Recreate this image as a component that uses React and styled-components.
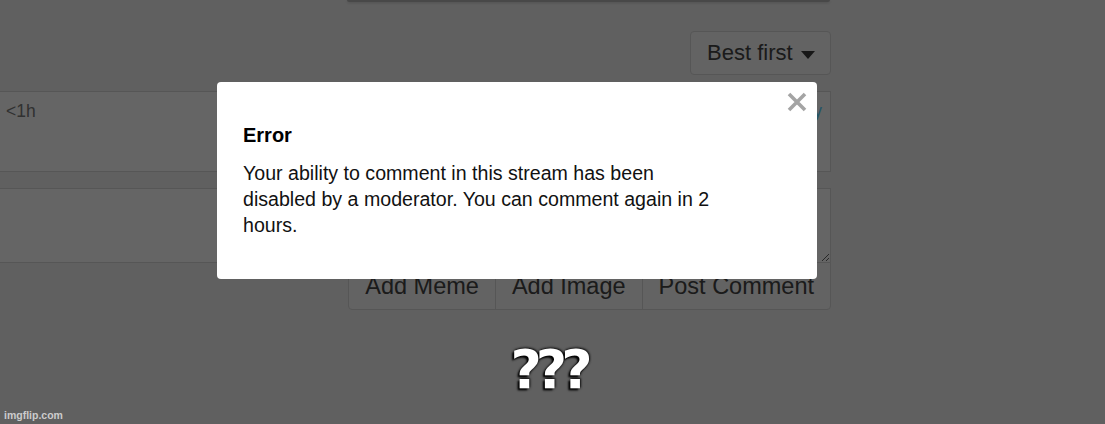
import React from "react";
import styled, { createGlobalStyle } from "styled-components";

const GlobalStyle = createGlobalStyle`
  html, body {
    margin: 0;
    padding: 0;
    background: #f0f0f0;
    overflow: hidden;
  }
  body {
    font-family: "Liberation Sans", Arial, sans-serif;
  }
`;

const Page = styled.div`
  position: relative;
  width: 1105px;
  height: 424px;
  overflow: hidden;
  background: #f0f0f0;
`;

const Content = styled.div`
  display: flex;
  flex-direction: column;
  width: 833px;
  margin-left: -1px;
`;

const TopEdge = styled.div`
  margin-left: 348px;
  width: 483px;
  height: 2px;
  background: #b4b4b4;
  border-radius: 0 0 4px 4px;
  box-shadow: 0 1px 3px rgba(0, 0, 0, 0.18);
`;

const SortRow = styled.div`
  display: flex;
  justify-content: flex-end;
  margin-top: 29px;
  padding-right: 1px;
`;

const SortButton = styled.button`
  display: flex;
  align-items: center;
  gap: 8px;
  height: 44px;
  width: 141px;
  box-sizing: border-box;
  padding: 0 14px 0 16px;
  border: 1px solid #d6d6d6;
  border-radius: 4px;
  background: #f7f7f7;
  font-family: "Liberation Sans", Arial, sans-serif;
  font-size: 22px;
  color: #444;
`;

const Caret = styled.span`
  width: 0;
  height: 0;
  border-left: 7px solid transparent;
  border-right: 7px solid transparent;
  border-top: 8px solid #3a3a3a;
  margin-top: 3px;
`;

const CommentCard = styled.div`
  margin-top: 16px;
  height: 81px;
  box-sizing: border-box;
  background: #fdfdfd;
  border: 1px solid #d8d8d8;
  margin-right: 1px;
`;

const CardHeader = styled.div`
  display: flex;
  justify-content: space-between;
  padding: 9px 8px 0 6px;
  font-size: 17.5px;
  line-height: 21px;
`;

const TimeAgo = styled.span`
  color: #7a7a7a;
`;

const ReplyLink = styled.span`
  color: #5ad2ff;
`;

const Compose = styled.textarea`
  display: block;
  margin-top: 16px;
  margin-right: 1px;
  height: 75px;
  box-sizing: border-box;
  background: #fdfdfd;
  border: 1px solid #d8d8d8;
  border-radius: 0;
  resize: vertical;
  font-family: "Liberation Sans", Arial, sans-serif;
  font-size: 16px;
`;

const ButtonGroup = styled.div`
  display: flex;
  align-self: flex-end;
  margin-top: -1px;
  margin-right: 1px;
`;

const GroupButton = styled.button`
  height: 48px;
  box-sizing: border-box;
  padding: 0 16px;
  margin-left: -1px;
  border: 1px solid #d6d6d6;
  background: #f7f7f7;
  font-family: "Liberation Sans", Arial, sans-serif;
  font-size: 23.5px;
  color: #444;
  border-radius: ${(p) =>
    p.$first ? "0 0 0 4px" : p.$last ? "0 0 4px 0" : "0"};
`;

const Backdrop = styled.div`
  position: absolute;
  inset: 0;
  background: rgba(0, 0, 0, 0.6);
`;

const Modal = styled.div`
  position: absolute;
  left: 217px;
  top: 82px;
  width: 600px;
  height: 197px;
  box-sizing: border-box;
  padding: 41px 26px 0 26px;
  background: #ffffff;
  border-radius: 4px;
`;

const CloseButton = styled.button`
  position: absolute;
  top: 9px;
  right: 9px;
  width: 22px;
  height: 22px;
  padding: 0;
  border: none;
  background: transparent;
  display: flex;
  align-items: center;
  justify-content: center;
`;

const Title = styled.h4`
  margin: 0 0 12px;
  font-size: 20px;
  line-height: 25px;
  font-weight: bold;
  color: #000;
`;

const Message = styled.p`
  margin: 0;
  width: 482px;
  font-size: 19.6px;
  line-height: 26px;
  color: #111;
`;

const Caption = styled.div`
  position: absolute;
  left: 0;
  right: 0;
  top: 343px;
  padding-right: 8px;
  text-align: center;
  font-family: "DejaVu Sans", sans-serif;
  font-weight: bold;
  font-size: 54px;
  line-height: 54px;
  letter-spacing: -6px;
  color: #fff;
  text-shadow: -2px 2px 2px #000, 0 0 3px rgba(0, 0, 0, 0.9),
    1px -1px 2px rgba(0, 0, 0, 0.6);
`;

const Watermark = styled.div`
  position: absolute;
  left: 4px;
  top: 410px;
  font-family: "Liberation Sans", Arial, sans-serif;
  font-size: 10.5px;
  font-weight: bold;
  line-height: 11px;
  color: #cccccc;
`;

export default function App() {
  return (
    <Page>
      <GlobalStyle />
      <Content>
        <TopEdge />
        <SortRow>
          <SortButton>
            Best first
            <Caret />
          </SortButton>
        </SortRow>
        <CommentCard>
          <CardHeader>
            <TimeAgo>&lt;1h</TimeAgo>
            <ReplyLink>reply</ReplyLink>
          </CardHeader>
        </CommentCard>
        <Compose />
        <ButtonGroup>
          <GroupButton $first>Add Meme</GroupButton>
          <GroupButton>Add Image</GroupButton>
          <GroupButton $last>Post Comment</GroupButton>
        </ButtonGroup>
      </Content>
      <Backdrop />
      <Modal>
        <CloseButton aria-label="Close">
          <svg width="20" height="20" viewBox="0 0 20 20">
            <path
              d="M2 2 L18 18 M18 2 L2 18"
              stroke="#a4a4a4"
              strokeWidth="3.6"
              strokeLinecap="butt"
            />
          </svg>
        </CloseButton>
        <Title>Error</Title>
        <Message>
          Your ability to comment in this stream has been disabled by a
          moderator. You can comment again in 2 hours.
        </Message>
      </Modal>
      <Caption>???</Caption>
      <Watermark>imgflip.com</Watermark>
    </Page>
  );
}
